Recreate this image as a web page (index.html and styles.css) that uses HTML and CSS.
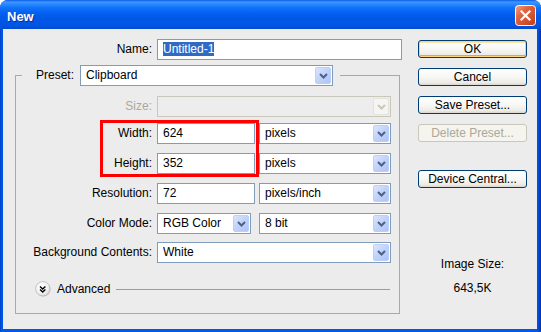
FILE: index.html
```html
<!DOCTYPE html>
<html>
<head>
<meta charset="utf-8">
<link rel="stylesheet" href="styles.css">
</head>
<body>
<div class="window">
  <div class="titlebar">
    <span class="title">New</span>
    <span class="close">
      <svg width="21" height="21" viewBox="0 0 21 21">
        <defs>
          <linearGradient id="cg" x1="0" y1="0" x2="1" y2="1">
            <stop offset="0" stop-color="#F2A58A"/>
            <stop offset="0.35" stop-color="#E2633F"/>
            <stop offset="1" stop-color="#C23C18"/>
          </linearGradient>
        </defs>
        <rect x="0.5" y="0.5" width="20" height="20" rx="3" fill="url(#cg)" stroke="#FFFFFF"/>
        <path d="M6.5 6.5 L14.5 14.5 M14.5 6.5 L6.5 14.5" stroke="#FFFFFF" stroke-width="2.2" stroke-linecap="square"/>
      </svg>
    </span>
  </div>
  <div class="frame">
    <div class="client">
      <div class="main">
        <div class="name-row">
          <span class="lbl name-lbl">Name:</span>
          <div class="txt name-field"><span class="sel">Untitled-1</span></div>
        </div>
        <fieldset class="group">
          <legend class="legend">
            <span class="lbl preset-lbl">Preset:</span>
            <div class="combo preset-field">
              <span class="val">Clipboard</span>
              <span class="arr"><svg width="9" height="6" viewBox="0 0 9 6"><path d="M1 1 L4.5 4.5 L8 1" fill="none" stroke="#4D6185" stroke-width="2"/></svg></span>
            </div>
          </legend>
          <div class="form">
            <span class="lbl dim r1">Size:</span>
            <div class="combo disabled span2 r1">
              <span class="val"></span>
              <span class="arr"><svg width="9" height="6" viewBox="0 0 9 6"><path d="M1 1 L4.5 4.5 L8 1" fill="none" stroke="#C9C7BA" stroke-width="2"/></svg></span>
            </div>

            <span class="lbl r2">Width:</span>
            <div class="txt f1 r2">624</div>
            <div class="combo f2 r2">
              <span class="val">pixels</span>
              <span class="arr"><svg width="9" height="6" viewBox="0 0 9 6"><path d="M1 1 L4.5 4.5 L8 1" fill="none" stroke="#4D6185" stroke-width="2"/></svg></span>
            </div>

            <span class="lbl r3">Height:</span>
            <div class="txt f1 r3">352</div>
            <div class="combo f2 r3">
              <span class="val">pixels</span>
              <span class="arr"><svg width="9" height="6" viewBox="0 0 9 6"><path d="M1 1 L4.5 4.5 L8 1" fill="none" stroke="#4D6185" stroke-width="2"/></svg></span>
            </div>

            <span class="lbl r4">Resolution:</span>
            <div class="txt f1 r4">72</div>
            <div class="combo f2 r4">
              <span class="val">pixels/inch</span>
              <span class="arr"><svg width="9" height="6" viewBox="0 0 9 6"><path d="M1 1 L4.5 4.5 L8 1" fill="none" stroke="#4D6185" stroke-width="2"/></svg></span>
            </div>

            <span class="lbl r5">Color Mode:</span>
            <div class="combo f1 cm r5">
              <span class="val">RGB Color</span>
              <span class="arr"><svg width="9" height="6" viewBox="0 0 9 6"><path d="M1 1 L4.5 4.5 L8 1" fill="none" stroke="#4D6185" stroke-width="2"/></svg></span>
            </div>
            <div class="combo f2 r5">
              <span class="val">8 bit</span>
              <span class="arr"><svg width="9" height="6" viewBox="0 0 9 6"><path d="M1 1 L4.5 4.5 L8 1" fill="none" stroke="#4D6185" stroke-width="2"/></svg></span>
            </div>

            <span class="lbl r6">Background Contents:</span>
            <div class="combo span2 r6">
              <span class="val">White</span>
              <span class="arr"><svg width="9" height="6" viewBox="0 0 9 6"><path d="M1 1 L4.5 4.5 L8 1" fill="none" stroke="#4D6185" stroke-width="2"/></svg></span>
            </div>

            <div class="redbox"></div>
          </div>
          <div class="advanced">
            <svg class="adv-btn" width="16" height="16" viewBox="0 0 16 16">
              <defs>
                <radialGradient id="ag" cx="0.4" cy="0.35" r="0.75">
                  <stop offset="0" stop-color="#FFFFFF"/>
                  <stop offset="0.6" stop-color="#F1F1F1"/>
                  <stop offset="1" stop-color="#CFCFCF"/>
                </radialGradient>
              </defs>
              <circle cx="8.5" cy="8.5" r="7" fill="#C8C8C8"/>
              <circle cx="7.8" cy="7.8" r="7.2" fill="url(#ag)" stroke="#B8B8B8" stroke-width="0.8"/>
              <path d="M5 5.5 L7.7 8 L10.4 5.5 M5 8.6 L7.7 11.1 L10.4 8.6" fill="none" stroke="#000000" stroke-width="1.4"/>
            </svg>
            <span class="adv-lbl">Advanced</span>
            <span class="adv-line"></span>
          </div>
        </fieldset>
      </div>
      <div class="side">
        <div class="btn def">OK</div>
        <div class="btn">Cancel</div>
        <div class="btn">Save Preset...</div>
        <div class="btn dis">Delete Preset...</div>
        <div class="btn dc">Device Central...</div>
        <div class="imgsize">
          <div>Image Size:</div>
          <div class="imgval">643,5K</div>
        </div>
      </div>
    </div>
  </div>
</div>
</body>
</html>
```

FILE: styles.css
```css
html, body {
  margin: 0;
  padding: 0;
}
body {
  width: 541px;
  height: 332px;
  overflow: hidden;
  background: #ffffff;
  font-family: "Liberation Sans", Arial, sans-serif;
  font-size: 12px;
  color: #000000;
}
.window {
  width: 541px;
  height: 332px;
  display: flex;
  flex-direction: column;
  border-radius: 8px 8px 0 0;
  overflow: hidden;
  background: #0055E5;
}
.titlebar {
  height: 29px;
  flex: none;
  box-sizing: border-box;
  display: flex;
  align-items: flex-start;
  justify-content: space-between;
  padding: 5px 5px 0 7px;
  background: linear-gradient(to bottom,
    #0A5CE8 0px, #3E97FF 2px, #2C89FF 4px, #0F71FA 8px,
    #0461EF 13px, #0058E6 18px, #0056E4 24px, #0052DC 27px, #0049CC 29px);
}
.title {
  margin-top: 4px;
  line-height: 15px;
  font-size: 13px;
  font-weight: bold;
  color: #ffffff;
  text-shadow: 1px 1px 0 #0F2D8C;
}
.close {
  width: 21px;
  height: 21px;
  display: block;
}
.close svg {
  display: block;
}
.frame {
  flex: 1;
  display: flex;
  padding: 0 4px 3px 3px;
  background: linear-gradient(to right, #0042C8 0px, #0058EA 2px, #0058EA 537px, #0046CE 539px, #0032B0 541px);
}
.client {
  flex: 1;
  display: flex;
  background: #ECECEC;
}
.main {
  width: 399px;
  flex: none;
  box-sizing: border-box;
  padding: 10px 0 0 12px;
}
.lbl {
  line-height: 21px;
  text-align: right;
  white-space: nowrap;
}
.dim {
  color: #ACA899;
}
.name-row {
  display: flex;
  gap: 5px;
  height: 21px;
}
.name-lbl {
  width: 137px;
}
.txt {
  box-sizing: border-box;
  height: 21px;
  border: 1px solid #7F9DB9;
  background: #ffffff;
  padding-left: 5px;
  line-height: 19px;
  white-space: nowrap;
}
.name-field {
  width: 245px;
}
.sel {
  background: #316AC5;
  color: #ffffff;
}
.group {
  margin: 5px 0 0 0;
  padding: 14px 0 16px 0;
  width: 385px;
  box-sizing: border-box;
  border: 1px solid #A9A9A9;
  min-width: 0;
}
.legend {
  display: flex;
  align-items: center;
  padding: 0 7px 0 14px;
  margin: 0 0 -4px 6px;
}
.preset-lbl {
  width: 39px;
  text-align: left;
  margin-right: 5px;
}
.combo {
  box-sizing: border-box;
  height: 21px;
  border: 1px solid #7F9DB9;
  background: #ffffff;
  display: flex;
  align-items: center;
  padding-left: 5px;
}
.val {
  flex: 1;
  line-height: 19px;
  white-space: nowrap;
  overflow: hidden;
}
.arr {
  width: 16px;
  height: 17px;
  margin-right: 1px;
  box-sizing: border-box;
  border: 1px solid #BCCFFB;
  border-radius: 2px;
  background: linear-gradient(135deg, #DCE6FD 0%, #C3D4FB 45%, #AEC4F5 100%);
  display: flex;
  align-items: center;
  justify-content: center;
}
.arr svg {
  display: block;
}
.combo.disabled {
  border-color: #C9C7BA;
  background: #EDEDED;
}
.combo.disabled .arr {
  background: #F5F5F2;
  border-color: #E3E2DC;
}
.preset-field {
  width: 253px;
}
.form {
  display: grid;
  grid-template-columns: 141px 102px 132px;
  grid-template-rows: 27px 30px 30px 30px 29px 21px;
  align-items: start;
}
.r1 { grid-row: 1; }
.r2 { grid-row: 2; }
.r3 { grid-row: 3; }
.r4 { grid-row: 4; }
.r5 { grid-row: 5; }
.r6 { grid-row: 6; }
.form .lbl {
  padding-right: 5px;
  grid-column: 1;
}
.f1 {
  grid-column: 2;
  width: 98px;
}
.f1.cm {
  width: 94px;
}
.f2 {
  grid-column: 3;
  width: 132px;
}
.span2 {
  grid-column: 2 / 4;
  width: 234px;
}
.redbox {
  grid-column: 1 / 3;
  grid-row: 2 / 4;
  justify-self: end;
  align-self: start;
  width: 159px;
  height: 57px;
  margin-top: -3px;
  box-sizing: border-box;
  border: 3px solid #FF0000;
  pointer-events: none;
}
.advanced {
  margin-top: 18px;
  padding-left: 19px;
  margin-right: 9px;
  height: 16px;
  display: flex;
  align-items: center;
}
.adv-btn {
  display: block;
  flex: none;
}
.adv-lbl {
  margin-left: 6px;
  line-height: 16px;
}
.adv-line {
  flex: 1;
  height: 1px;
  margin-left: 6px;
  background: #9C9C9C;
}
.side {
  width: 109px;
  flex: none;
  margin-left: 16px;
  padding-top: 11px;
  display: flex;
  flex-direction: column;
  gap: 10px;
}
.btn {
  height: 18px;
  box-sizing: border-box;
  border: 1px solid #003C74;
  border-radius: 3px;
  background: linear-gradient(to bottom, #FFFFFF 0%, #F7F7F4 50%, #ECEBE6 85%, #D8D6CE 100%);
  text-align: center;
  line-height: 16px;
  white-space: nowrap;
}
.btn.def {
  box-shadow: inset 0 0 0 1px #FCD37A, inset 0 -2px 0 #EFA52A, inset 0 2px 0 #FFE2A6;
}
.btn.dis {
  border-color: #C9C7BA;
  background: #F5F4EE;
  color: #ACA899;
}
.btn.dc {
  margin-top: 18px;
}
.imgsize {
  margin-top: 59px;
  text-align: center;
  line-height: 14px;
}
.imgval {
  margin-top: 10px;
}
```
